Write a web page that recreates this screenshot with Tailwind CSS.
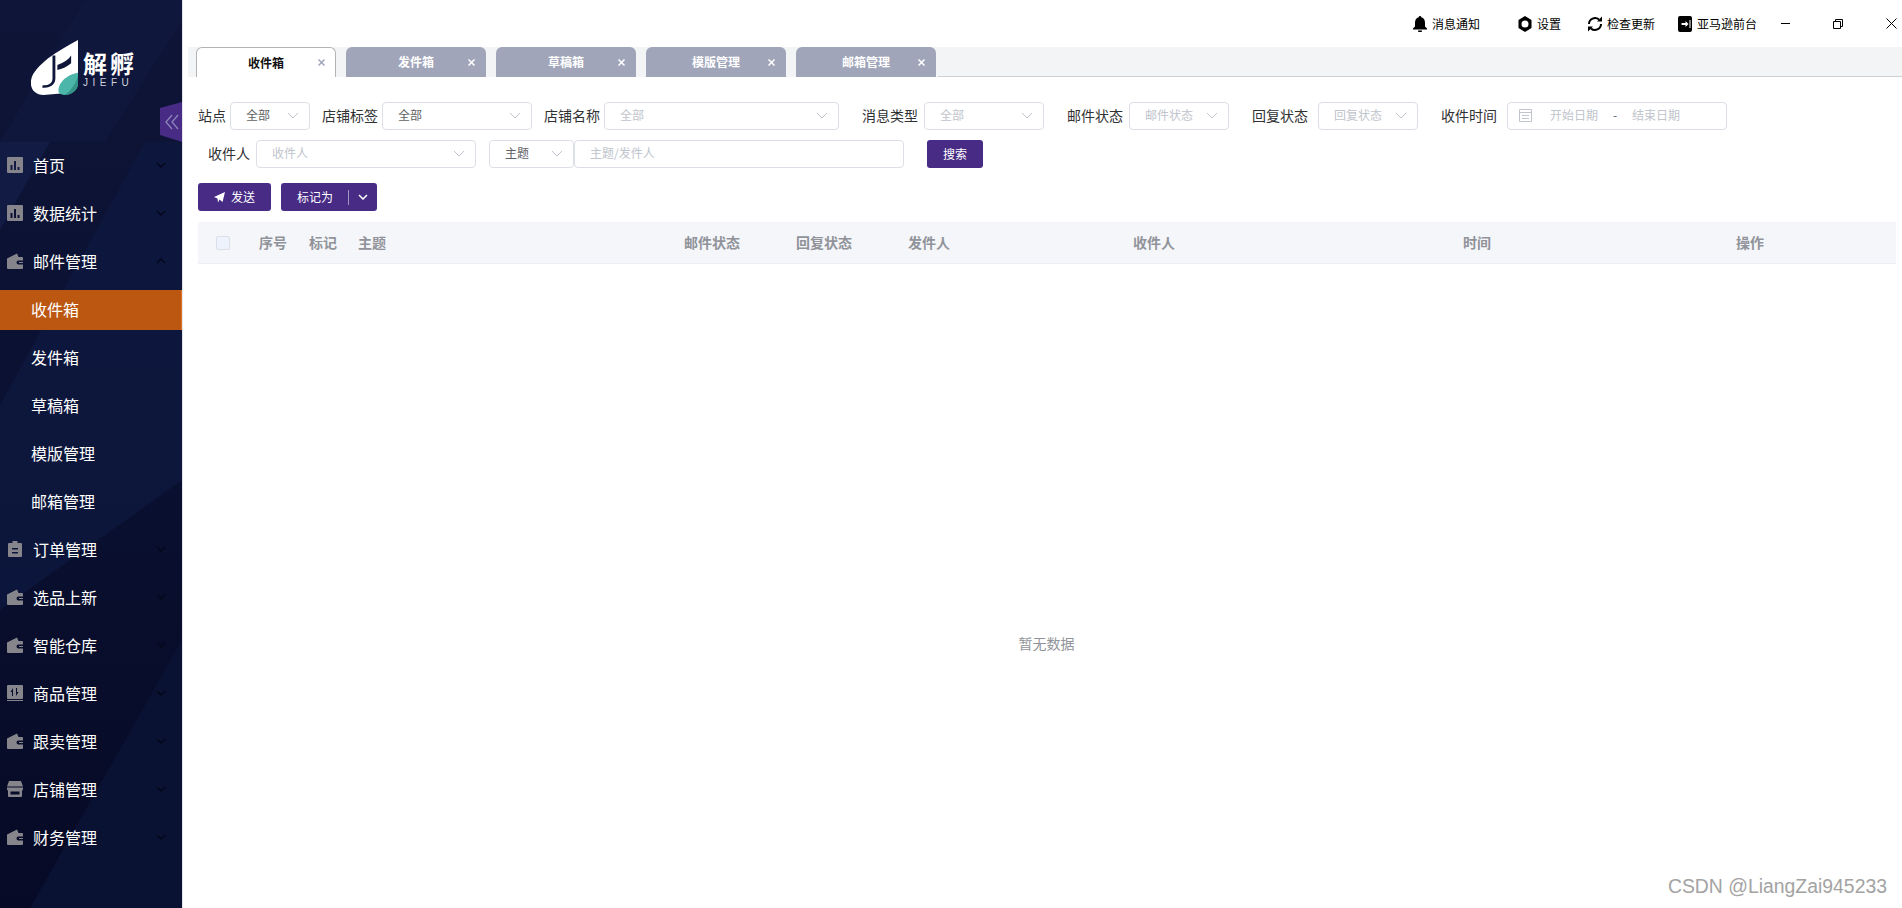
<!DOCTYPE html>
<html lang="en">
<head>
    <meta charset="UTF-8">
    <title>JIEFU</title>
    <script src="https://cdn.jsdelivr.net/npm/@tailwindcss/browser@4"></script>
</head>
<body class="bg-white">
    <svg class="hidden">
        <symbol id="i-chart" viewBox="0 0 16 16"><path fill-rule="evenodd" d="M1 0h14a1 1 0 0 1 1 1v14a1 1 0 0 1-1 1H1a1 1 0 0 1-1-1V1a1 1 0 0 1 1-1zM3.500 8v5h2V8zm3.500-4v9h2V4zm3.500 6v3h2v-3z" fill="#85858b"/></symbol>
        <symbol id="i-wallet" viewBox="0 0 16 16"><path fill-rule="evenodd" d="M1 5 10 .5 11.500 4H15a1 1 0 0 1 1 1v2.500h-4.500a2 2 0 0 0 0 4H16V15a1 1 0 0 1-1 1H1a1 1 0 0 1-1-1V6a1 1 0 0 1 1-1z" fill="#85858b"/><path d="M12 9h4v1h-4z" fill="#85858b"/></symbol>
        <symbol id="i-clip" viewBox="0 0 16 16"><path fill-rule="evenodd" d="M5.500 0h5v2H14a1 1 0 0 1 1 1v12a1 1 0 0 1-1 1H2a1 1 0 0 1-1-1V3a1 1 0 0 1 1-1h3.500zM5 7v1.500h6V7zm0 4v1.500h6V11z" fill="#85858b"/></symbol>
        <symbol id="i-goods" viewBox="0 0 16 16"><path fill-rule="evenodd" d="M1 0h14a1 1 0 0 1 1 1v12a1 1 0 0 1-1 1H1a1 1 0 0 1-1-1V1a1 1 0 0 1 1-1zM6 3 3.500 7h1.500v4h1zM9 3v8l2.500-4H10V3z" fill="#85858b"/><path d="M0 15h16v1H0z" fill="#85858b"/></symbol>
        <symbol id="i-shop" viewBox="0 0 16 16"><path fill-rule="evenodd" d="M2 0h12l2 5.500H0zM0 6.500h16V8a2 2 0 0 1-1 1.700V15a1 1 0 0 1-1 1H2a1 1 0 0 1-1-1V9.700A2 2 0 0 1 0 8zM3.500 10.500v3h9v-3z" fill="#85858b"/></symbol>
        <symbol id="i-down" viewBox="0 0 10 6"><path d="M1 1l4 4 4-4" fill="none" stroke="currentColor" stroke-width="1.500"/></symbol>
        <symbol id="i-sel" viewBox="0 0 12 7"><path d="M1 1l5 5 5-5" fill="none" stroke="#c0c4cc" stroke-width="1"/></symbol>
        <symbol id="i-x" viewBox="0 0 7 7"><path d="M.5.500l6 6M6.500.500l-6 6" fill="none" stroke="currentColor" stroke-width="1.500"/></symbol>
    </svg>

    <div class="flex w-[1902px] h-[908px] overflow-hidden font-['Noto_Sans_CJK_SC',sans-serif]">
        <!-- sidebar -->
        <aside class="relative w-[183px] h-full shrink-0 border-r border-[#e2e4ea] bg-gradient-to-b from-[#0e1538] via-[#0a1030] to-[#060a26] text-white">
            <svg class="absolute inset-0" width="182" height="908" viewBox="0 0 182 908">
                <polygon points="0,142 85,0 182,0 182,20 105,142" fill="#121a42" opacity="0.5"/>
                <polygon points="0,142 50,142 0,230" fill="#16224f" opacity="0.6"/>
                <polygon points="145,142 182,142 182,480 0,610 0,405" fill="#0e183f" opacity="0.8"/>
                <polygon points="182,640 182,908 30,908" fill="#0a1234"/>
            </svg>

            <div class="relative h-[141px]">
                <svg class="absolute left-[31px] top-[40px]" width="47" height="55" viewBox="11 5 41 57" preserveAspectRatio="none">
                    <path d="M52 5V40L42 60 22 62C14 62 10 55 11 47 12 38 20 30 26 24 34 17 44 10 52 5z" fill="#fff"/>
                    <path d="M31 21V45C31 51 26 54 21 53" fill="none" stroke="#0f1639" stroke-width="2.500"/>
                    <path d="M34 31C40 28 44 25 46 21V29C42 33 38 35 34 36z" fill="#0f1639"/>
                    <path d="M52 39V50C52 57 46 62 40 62 39 62 36 61 35 59 34 50 42 41 52 39z" fill="#4cb6ab"/>
                    <path d="M52 42V50C52 57 46 62 40 62 46 58 50 50 52 42z" fill="#349488"/>
                </svg>
                <div class="absolute left-[83px] top-[49px] text-[24px] leading-[28px] font-bold tracking-[3px] whitespace-nowrap">解孵</div>
                <div class="absolute left-[83px] top-[76px] text-[10px] leading-[14px] tracking-[4.500px] text-[#cfd2dc] font-['Liberation_Sans',sans-serif]">JIEFU</div>
                <svg class="absolute left-[160px] top-[102px]" width="22" height="40" viewBox="0 0 22 40">
                    <path d="M0 6 22 0V40L0 33z" fill="#472b85"/>
                    <path d="M12 13 6 20l6 7M18 13l-6 7 6 7" fill="none" stroke="#8c84b8" stroke-width="1.300"/>
                </svg>
            </div>

            <nav class="relative flex flex-col text-[16px]">
                <a class="flex items-center h-12 pl-[7px] pr-4"><svg class="w-4 h-4 mr-[10px]"><use href="#i-chart"/></svg><span class="flex-1">首页</span><svg class="w-[10px] h-[6px] text-[#05071a]"><use href="#i-down"/></svg></a>
                <a class="flex items-center h-12 pl-[7px] pr-4"><svg class="w-4 h-4 mr-[10px]"><use href="#i-chart"/></svg><span class="flex-1">数据统计</span><svg class="w-[10px] h-[6px] text-[#05071a]"><use href="#i-down"/></svg></a>
                <a class="flex items-center h-12 pl-[7px] pr-4"><svg class="w-4 h-4 mr-[10px]"><use href="#i-wallet"/></svg><span class="flex-1">邮件管理</span><svg class="w-[10px] h-[6px] rotate-180 text-[#05071a]"><use href="#i-down"/></svg></a>
                <div class="flex flex-col">
                    <div class="h-12 pt-[5px]"><a class="flex items-center h-10 pb-[2px] pl-[31px] bg-[#bc5711] border-r border-[#e8702a]">收件箱</a></div>
                    <a class="flex items-center h-12 pl-[31px]">发件箱</a>
                    <a class="flex items-center h-12 pl-[31px]">草稿箱</a>
                    <a class="flex items-center h-12 pl-[31px]">模版管理</a>
                    <a class="flex items-center h-12 pl-[31px]">邮箱管理</a>
                </div>
                <a class="flex items-center h-12 pl-[7px] pr-4"><svg class="w-4 h-4 mr-[10px]"><use href="#i-clip"/></svg><span class="flex-1">订单管理</span><svg class="w-[10px] h-[6px] text-[#05071a]"><use href="#i-down"/></svg></a>
                <a class="flex items-center h-12 pl-[7px] pr-4"><svg class="w-4 h-4 mr-[10px]"><use href="#i-wallet"/></svg><span class="flex-1">选品上新</span><svg class="w-[10px] h-[6px] text-[#05071a]"><use href="#i-down"/></svg></a>
                <a class="flex items-center h-12 pl-[7px] pr-4"><svg class="w-4 h-4 mr-[10px]"><use href="#i-wallet"/></svg><span class="flex-1">智能仓库</span><svg class="w-[10px] h-[6px] text-[#05071a]"><use href="#i-down"/></svg></a>
                <a class="flex items-center h-12 pl-[7px] pr-4"><svg class="w-4 h-4 mr-[10px]"><use href="#i-goods"/></svg><span class="flex-1">商品管理</span><svg class="w-[10px] h-[6px] text-[#05071a]"><use href="#i-down"/></svg></a>
                <a class="flex items-center h-12 pl-[7px] pr-4"><svg class="w-4 h-4 mr-[10px]"><use href="#i-wallet"/></svg><span class="flex-1">跟卖管理</span><svg class="w-[10px] h-[6px] text-[#05071a]"><use href="#i-down"/></svg></a>
                <a class="flex items-center h-12 pl-[7px] pr-4"><svg class="w-4 h-4 mr-[10px]"><use href="#i-shop"/></svg><span class="flex-1">店铺管理</span><svg class="w-[10px] h-[6px] text-[#05071a]"><use href="#i-down"/></svg></a>
                <a class="flex items-center h-12 pl-[7px] pr-4"><svg class="w-4 h-4 mr-[10px]"><use href="#i-wallet"/></svg><span class="flex-1">财务管理</span><svg class="w-[10px] h-[6px] text-[#05071a]"><use href="#i-down"/></svg></a>
            </nav>
        </aside>

        <!-- main -->
        <main class="relative flex-1 flex flex-col min-w-0 text-[14px] text-[#303133]">
            <!-- title bar -->
            <div class="flex items-center h-[47px] justify-end text-[12px] text-black">
                <svg class="w-[14px] h-4 mr-[5px]" viewBox="0 0 14 16"><path d="M7 0a1.300 1.300 0 0 1 1.300 1.300C11 2 12 4.200 12 7v3.500l2 2V13.500H0v-1l2-2V7c0-2.800 1-5 3.700-5.700A1.300 1.300 0 0 1 7 0zM5 14.500h4a2 2 0 0 1-4 0z" fill="#000"/></svg>
                <span class="w-[86px]">消息通知</span>
                <svg class="w-[14px] h-4 mr-[5px]" viewBox="0 0 14 16"><path fill-rule="evenodd" d="M7 0l6.500 4v8L7 16 .5 12V4zm0 4.500a3.500 3.500 0 1 0 0 7 3.500 3.500 0 0 0 0-7z" fill="#000"/></svg>
                <span class="w-[50px]">设置</span>
                <svg class="w-4 h-4 mr-[4px]" viewBox="0 0 16 16"><path d="M2 8a6 6 0 0 1 10-4.400M14 8a6 6 0 0 1-10 4.400" fill="none" stroke="#000" stroke-width="2"/><path d="M10 5.500h5V.5zM6 10.500H1v5z" fill="#000"/></svg>
                <span class="w-[71px]">检查更新</span>
                <svg class="w-[14px] h-[16px] mr-[5px]" viewBox="0 0 14 16"><path fill-rule="evenodd" d="M2 0h10a2 2 0 0 1 2 2v12a2 2 0 0 1-2 2H2a2 2 0 0 1-2-2V2a2 2 0 0 1 2-2zM7.500 5v2H3.500v2h4v2l3-3zM11.500 4v8h1V4z" fill="#000"/></svg>
                <span class="w-[60px] whitespace-nowrap">亚马逊前台</span>
                <div class="w-[66px] flex justify-center ml-[-5px]"><div class="w-[9px] h-px bg-black"></div></div>
                <svg class="w-[10px] h-[10px] ml-[15px]" viewBox="0 0 10 10"><path d="M.5 2.500h7v7h-7zM2.500 2.500v-2h7v7h-2" fill="none" stroke="#000"/></svg>
                <svg class="w-[11px] h-[11px] ml-[43px] mr-[5px]" viewBox="0 0 11 11"><path d="M.5.5l10 10M10.500.5l-10 10" stroke="#000" fill="none"/></svg>
            </div>

            <!-- tabs -->
            <div class="flex ml-[5px] h-[30px] bg-[#f3f4f6] pl-2 gap-[10px] text-[12px]">
                <div class="relative flex items-center justify-center w-[140px] bg-white border border-b-0 border-[#b4b4b4] rounded-t-md font-semibold text-[#111]">收件箱<svg class="absolute right-[10px] w-[7px] h-[7px] text-[#a0a5ba]"><use href="#i-x"/></svg></div>
                <div class="relative flex items-center justify-center w-[140px] bg-[#a0a5ba] rounded-t-md font-semibold text-white">发件箱<svg class="absolute right-[11px] w-[7px] h-[7px]"><use href="#i-x"/></svg></div>
                <div class="relative flex items-center justify-center w-[140px] bg-[#a0a5ba] rounded-t-md font-semibold text-white">草稿箱<svg class="absolute right-[11px] w-[7px] h-[7px]"><use href="#i-x"/></svg></div>
                <div class="relative flex items-center justify-center w-[140px] bg-[#a0a5ba] rounded-t-md font-semibold text-white">模版管理<svg class="absolute right-[11px] w-[7px] h-[7px]"><use href="#i-x"/></svg></div>
                <div class="relative flex items-center justify-center w-[140px] bg-[#a0a5ba] rounded-t-md font-semibold text-white">邮箱管理<svg class="absolute right-[11px] w-[7px] h-[7px]"><use href="#i-x"/></svg></div>
                <div class="flex-1 border-b border-[#d0d0d0] ml-[-8px]"></div>
            </div>

            <!-- filter row 1 -->
            <div class="flex items-center h-7 mt-[25px] ml-[15px]">
                <label class="w-[32px] pb-[2px] whitespace-nowrap">站点</label>
                <div class="flex items-center justify-between w-[80px] h-7 pb-[2px] border border-[#dcdfe6] rounded pl-[15px] pr-[10px] text-[12px] text-[#606266]">全部<svg class="w-3 h-[7px]"><use href="#i-sel"/></svg></div>
                <label class="w-[60px] ml-3 pb-[2px] whitespace-nowrap">店铺标签</label>
                <div class="flex items-center justify-between w-[150px] h-7 pb-[2px] border border-[#dcdfe6] rounded pl-[15px] pr-[10px] text-[12px] text-[#606266]">全部<svg class="w-3 h-[7px]"><use href="#i-sel"/></svg></div>
                <label class="w-[60px] ml-3 pb-[2px] whitespace-nowrap">店铺名称</label>
                <div class="flex items-center justify-between w-[235px] h-7 pb-[2px] border border-[#dcdfe6] rounded pl-[15px] pr-[10px] text-[12px] text-[#c0c4cc]">全部<svg class="w-3 h-[7px]"><use href="#i-sel"/></svg></div>
                <label class="w-[62px] ml-[23px] pb-[2px] whitespace-nowrap">消息类型</label>
                <div class="flex items-center justify-between w-[120px] h-7 pb-[2px] border border-[#dcdfe6] rounded pl-[15px] pr-[10px] text-[12px] text-[#c0c4cc]">全部<svg class="w-3 h-[7px]"><use href="#i-sel"/></svg></div>
                <label class="w-[62px] ml-[23px] pb-[2px] whitespace-nowrap">邮件状态</label>
                <div class="flex items-center justify-between w-[100px] h-7 pb-[2px] border border-[#dcdfe6] rounded pl-[15px] pr-[10px] text-[12px] text-[#c0c4cc]">邮件状态<svg class="w-3 h-[7px]"><use href="#i-sel"/></svg></div>
                <label class="w-[66px] ml-[23px] pb-[2px] whitespace-nowrap">回复状态</label>
                <div class="flex items-center justify-between w-[100px] h-7 pb-[2px] border border-[#dcdfe6] rounded pl-[15px] pr-[10px] text-[12px] text-[#c0c4cc]">回复状态<svg class="w-3 h-[7px]"><use href="#i-sel"/></svg></div>
                <label class="w-[66px] ml-[23px] pb-[2px] whitespace-nowrap">收件时间</label>
                <div class="flex items-center w-[220px] h-7 pb-[2px] border border-[#dcdfe6] rounded pl-[11px] text-[12px] text-[#c0c4cc]">
                    <svg class="w-[13px] h-[14px] mr-[18px]" viewBox="0 0 13 14"><path d="M.5 1.500h12v12H.5zM.5 4.500h12M3 7.500h7M3 10.500h7" fill="none" stroke="#c0c4cc"/></svg>
                    <span class="w-[48px]">开始日期</span><span class="w-[34px] text-center text-[#606266]">-</span><span>结束日期</span>
                </div>
            </div>

            <!-- filter row 2 -->
            <div class="flex items-center h-7 mt-[10px] ml-[25px]">
                <label class="w-[48px] pb-[2px] whitespace-nowrap">收件人</label>
                <div class="flex items-center justify-between w-[220px] h-7 pb-[2px] border border-[#dcdfe6] rounded pl-[15px] pr-[10px] text-[12px] text-[#c0c4cc]">收件人<svg class="w-3 h-[7px]"><use href="#i-sel"/></svg></div>
                <div class="flex items-center justify-between w-[85px] h-7 pb-[2px] ml-[13px] border border-[#dcdfe6] rounded pl-[15px] pr-[10px] text-[12px] text-[#606266]">主题<svg class="w-3 h-[7px]"><use href="#i-sel"/></svg></div>
                <div class="flex items-center w-[330px] h-7 pb-[2px] border border-[#dcdfe6] rounded pl-[15px] text-[12px] text-[#c0c4cc]">主题/发件人</div>
                <button class="w-[56px] h-7 ml-[23px] bg-[#472b85] rounded-[3px] text-white text-[12px]">搜索</button>
            </div>

            <!-- actions -->
            <div class="flex items-center h-7 mt-[15px] ml-[15px] text-[12px] text-white">
                <button class="flex items-center justify-center w-[73px] h-7 bg-[#472b85] rounded-[3px]">
                    <svg class="w-[11px] h-[11px] mr-[6px]" viewBox="0 0 11 11"><path d="M11 0 8.500 10 5.500 7.500 4 10.500 3.500 6.500 0 5z" fill="#fff"/></svg>发送
                </button>
                <div class="flex items-center w-[96px] h-7 ml-[10px] bg-[#472b85] rounded-[3px]">
                    <span class="w-[67px] pl-4">标记为</span>
                    <span class="w-px h-[15px] bg-white/50"></span>
                    <svg class="w-[10px] h-[6px] ml-[9px]"><use href="#i-down"/></svg>
                </div>
            </div>

            <!-- table -->
            <div class="flex items-center h-[42px] mt-[11px] ml-[15px] mr-[6px] bg-[#f5f6fa] border-b border-[#ebeef5] font-semibold text-[#909399]">
                <div class="w-[61px] pl-[18px]"><div class="w-[14px] h-[14px] bg-[#edf2fc] border border-[#dcdfe6] rounded-[2px]"></div></div>
                <div class="w-[50px]">序号</div>
                <div class="w-[49px]">标记</div>
                <div class="w-[326px]">主题</div>
                <div class="w-[112px]">邮件状态</div>
                <div class="w-[112px]">回复状态</div>
                <div class="w-[225px]">发件人</div>
                <div class="w-[330px]">收件人</div>
                <div class="w-[273px]">时间</div>
                <div class="flex-1">操作</div>
            </div>
            <div class="flex items-center justify-center h-[626px] pt-[132px] ml-[15px] mr-[7px] text-[14px] text-[#909399]">暂无数据</div>

            <div class="absolute right-[15px] bottom-[7px] text-[19.400px] text-[#a3a3a3] font-['Liberation_Sans',sans-serif]">CSDN @LiangZai945233</div>
        </main>
    </div>
</body>
</html>
